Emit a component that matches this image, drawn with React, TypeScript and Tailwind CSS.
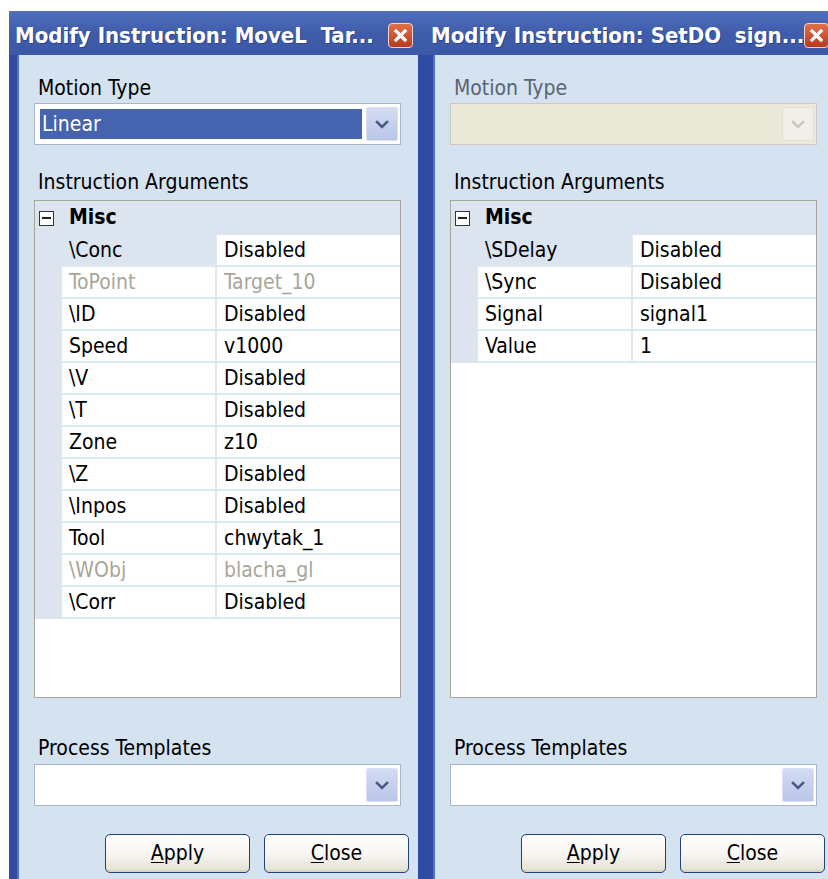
import React from "react";

type Row = { name: string; value: string; muted?: boolean };

const moveRows: Row[] = [
  { name: "\\Conc", value: "Disabled" },
  { name: "ToPoint", value: "Target_10", muted: true },
  { name: "\\ID", value: "Disabled" },
  { name: "Speed", value: "v1000" },
  { name: "\\V", value: "Disabled" },
  { name: "\\T", value: "Disabled" },
  { name: "Zone", value: "z10" },
  { name: "\\Z", value: "Disabled" },
  { name: "\\Inpos", value: "Disabled" },
  { name: "Tool", value: "chwytak_1" },
  { name: "\\WObj", value: "blacha_gl", muted: true },
  { name: "\\Corr", value: "Disabled" },
];

const setDoRows: Row[] = [
  { name: "\\SDelay", value: "Disabled" },
  { name: "\\Sync", value: "Disabled" },
  { name: "Signal", value: "signal1" },
  { name: "Value", value: "1" },
];

function Chevron({ disabled }: { disabled?: boolean }) {
  return (
    <svg width="14" height="9" viewBox="0 0 14 9">
      <path
        d="M2 2 L7 7 L12 2"
        fill="none"
        stroke={disabled ? "#c9c8bf" : "#4a5a82"}
        strokeWidth="2.6"
        strokeLinecap="square"
      />
    </svg>
  );
}

function Combo({
  value,
  selected,
  disabled,
}: {
  value?: string;
  selected?: boolean;
  disabled?: boolean;
}) {
  return (
    <div
      className={
        disabled
          ? "h-[42px] border border-[#cbc9bb] bg-[#ebead9] p-[2px] flex"
          : "h-[42px] border border-[#a9b6ca] bg-white p-[2px] flex"
      }
    >
      <div className="flex-1 p-[3px] pr-[4px] flex">
        {selected ? (
          <div className="flex-1 bg-[#4563ae] text-white leading-[30px] pl-[2px]">{value}</div>
        ) : (
          <div className="flex-1" />
        )}
      </div>
      <div
        className={
          disabled
            ? "w-[32px] my-[1px] rounded-[2px] border border-[#e2e0d6] bg-[#f1f0e8] flex items-center justify-center"
            : "w-[32px] my-[1px] rounded-[2px] border border-[#d8e0f2] bg-gradient-to-b from-[#d3dcf2] to-[#b9c6e8] flex items-center justify-center"
        }
      >
        <Chevron disabled={disabled} />
      </div>
    </div>
  );
}

function MinusBox() {
  return (
    <div className="w-[15px] h-[15px] shrink-0 border border-[#333] bg-white flex items-center justify-center">
      <div className="w-[9px] h-[1.5px] bg-[#222]" />
    </div>
  );
}

function Grid({ rows }: { rows: Row[] }) {
  return (
    <div className="h-[498px] border border-[#a6a59c] bg-white flex flex-col">
      <div className="h-[34px] shrink-0 bg-[#dce4ef] flex items-center pl-[4px]">
        <MinusBox />
        <span className="ml-[15px] font-bold">Misc</span>
      </div>
      {rows.map((r, i) => (
        <div key={r.name} className="h-[32px] shrink-0 flex">
          <div className="w-[27px] shrink-0 bg-[#dce4ef]" />
          <div
            className={
              i === 0
                ? "w-[155px] shrink-0 border-b-2 border-r-2 border-[#dfe7f1] bg-[#dce4ef] pl-[7px] leading-[30px]"
                : "w-[155px] shrink-0 border-b-2 border-r-2 border-[#dfe7f1] pl-[7px] leading-[30px]"
            }
          >
            <span className={r.muted ? "text-[#a9a59a]" : "text-black"}>{r.name}</span>
          </div>
          <div className="flex-1 border-b-2 border-[#dfe7f1] pl-[7px] leading-[30px]">
            <span className={r.muted ? "text-[#a9a59a]" : "text-black"}>{r.value}</span>
          </div>
        </div>
      ))}
      <div className="flex-1" />
    </div>
  );
}

function XpButton({ label }: { label: string }) {
  return (
    <div className="w-[145px] h-[39px] rounded-[5px] border border-[#22427c] bg-gradient-to-b from-white via-[#f7f6f1] to-[#e3e0d2] shadow-[inset_0_-2px_0_#d8d3c2,inset_0_1px_0_#ffffff] flex items-center justify-center text-black">
      <span>
        <span className="underline underline-offset-[2px] decoration-1">{label[0]}</span>
        {label.slice(1)}
      </span>
    </div>
  );
}

function CloseButton() {
  return (
    <div className="mt-[12px] w-[25px] h-[25px] shrink-0 rounded-[4px] border border-[#ecd5cc] bg-gradient-to-b from-[#e0704a] to-[#b9391b] flex items-center justify-center">
      <svg width="15" height="15" viewBox="0 0 15 15">
        <path d="M3 3 L12 12 M12 3 L3 12" stroke="white" strokeWidth="3.2" strokeLinecap="square" />
      </svg>
    </div>
  );
}

function Panel({
  title,
  motionDisabled,
  rows,
}: {
  title: string;
  motionDisabled?: boolean;
  rows: Row[];
}) {
  return (
    <div className="w-[416px] h-[868px] shrink-0 flex flex-col bg-[#2f4ba2]">
      <div className="h-[44px] shrink-0 flex items-start pl-[6px] pr-[12px] bg-gradient-to-b from-[#5270bd] via-[#3f5cab] to-[#3c59a8]">
        <span className="flex-1 whitespace-pre overflow-hidden pt-[12px] text-white font-bold text-[22px] leading-[25px] [text-shadow:1px_1px_0_#2a4290]">
          {title}
        </span>
        <CloseButton />
      </div>
      <div className="flex-1 ml-[8px] mr-[7px] border-l-2 border-[#5572c0] bg-[#d5e2f0] pl-[15px] pr-[17px] flex flex-col">
        <div
          className={
            motionDisabled
              ? "mt-[21px] pl-[4px] leading-[24px] text-[#5a6475]"
              : "mt-[21px] pl-[4px] leading-[24px] text-black"
          }
        >
          Motion Type
        </div>
        <div className="mt-[3px]">
          {motionDisabled ? <Combo disabled /> : <Combo value="Linear" selected />}
        </div>
        <div className="mt-[25px] pl-[4px] leading-[24px] text-black">Instruction Arguments</div>
        <div className="mt-[6px]">
          <Grid rows={rows} />
        </div>
        <div className="mt-[38px] pl-[4px] leading-[24px] text-black">Process Templates</div>
        <div className="mt-[4px]">
          <Combo />
        </div>
        <div className="mt-[28px] -mr-[8px] flex justify-end gap-[14px]">
          <XpButton label="Apply" />
          <XpButton label="Close" />
        </div>
      </div>
    </div>
  );
}

export default function App() {
  return (
    <div className="w-[828px] h-[879px] overflow-hidden bg-white pt-[11px] pl-[9px] flex font-['DejaVu_Sans_Condensed','Liberation_Sans',sans-serif] text-[21px]">
      <Panel title="Modify Instruction: MoveL  Tar..." rows={moveRows} />
      <Panel title="Modify Instruction: SetDO  sign..." motionDisabled rows={setDoRows} />
    </div>
  );
}
